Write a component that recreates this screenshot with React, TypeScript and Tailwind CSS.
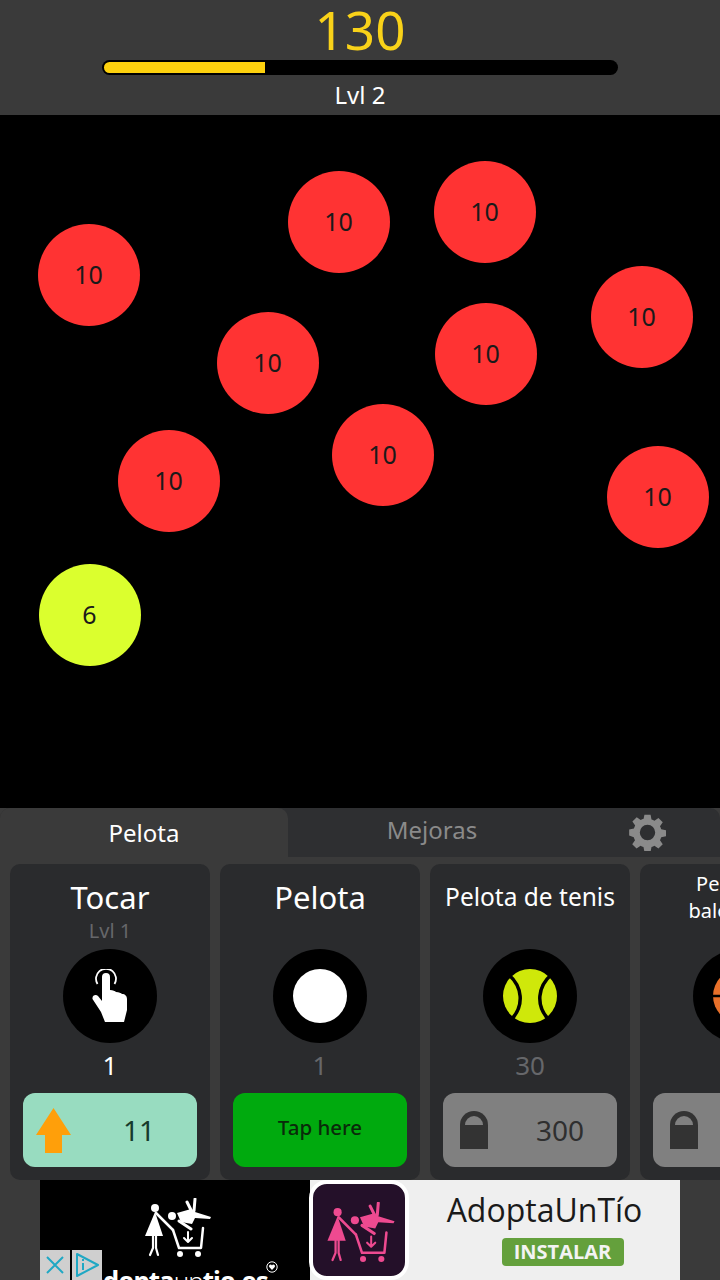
const font = "font-['Noto_Sans',sans-serif]";

const balls = [
  { x: 38, y: 224, n: 10 },
  { x: 288, y: 171, n: 10 },
  { x: 434, y: 161, n: 10 },
  { x: 591, y: 266, n: 10 },
  { x: 217, y: 312, n: 10 },
  { x: 435, y: 303, n: 10 },
  { x: 332, y: 404, n: 10 },
  { x: 118, y: 430, n: 10 },
  { x: 607, y: 446, n: 10 },
];

function Ball({ x, y, n, color }: { x: number; y: number; n: number; color: string }) {
  return (
    <div
      className="absolute flex h-[102px] w-[102px] items-center justify-center rounded-full pr-px text-[25px] text-[#1a1a1a]"
      style={{ left: x, top: y - 115, backgroundColor: color }}
    >
      {n}
    </div>
  );
}

// the two figures with the cart, used by the banner logo and the app icon
function Figures({ color }: { color: string }) {
  return (
    <g fill={color} stroke={color} strokeLinecap="round" strokeLinejoin="round">
      <circle cx="10" cy="10" r="4" stroke="none" />
      <path d="M10 14 L0 38 H18 Z" stroke="none" />
      <path d="M11 15 L28 32" strokeWidth="2.5" fill="none" />
      <path d="M8 38 V50 L5 57 M11 38 V50 L13 57" strokeWidth="2.2" fill="none" />
      <circle cx="27" cy="18" r="4" stroke="none" />
      <path d="M32 15 L46 11 L50 14 L66 19 L65 21 L50 20 L47 26 L36 24 Z" stroke="none" />
      <path d="M42 4 L46 12 M50 1 L49 13 M34 23 L46 31" strokeWidth="3" fill="none" />
      <path d="M28 32 L34 50 H56 L58 30" strokeWidth="2.5" fill="none" />
      <circle cx="35" cy="56" r="3" stroke="none" />
      <circle cx="53" cy="56" r="3" stroke="none" />
      <path d="M43 34 V43 M39 40 L43 44 L47 40" strokeWidth="2" fill="none" />
    </g>
  );
}

function Lock() {
  return (
    <svg width="28" height="38" viewBox="0 0 28 38">
      <path d="M0 38 V14 A14 14 0 0 1 28 14 V38 Z" fill="#333" />
      <path d="M5 14 A9 9 0 0 1 23 14 Z" fill="#808080" />
    </svg>
  );
}

function Hand() {
  return (
    <svg width="36" height="54" viewBox="0 0 36 54">
      <path d="M5.5 15 A10 10 0 1 1 22.5 15" fill="none" stroke="#fff" strokeWidth="1.8" />
      <path
        d="M10 8 A4 4 0 0 1 18 8 V21 C21 21 23 22 24 23 C27 23 29 24 30 25 C33 25 35 27 35 30 V41 L32 53 H13 L9 43 L0.5 30 C0 26 4 25 6 27 L10 32 Z"
        fill="#fff"
      />
    </svg>
  );
}

function Tennis() {
  return (
    <svg width="54" height="54" viewBox="0 0 54 54">
      <circle cx="27" cy="27" r="27" fill="#cfe80a" />
      <path d="M5 5 C20 18 21 36 9 50 M49 5 C34 18 33 36 45 50" fill="none" stroke="#000" strokeWidth="3.5" />
    </svg>
  );
}

function Card({
  title,
  small,
  sub,
  icon,
  value,
  valueDim,
  button,
}: {
  title: React.ReactNode;
  small?: boolean;
  sub?: string;
  icon: React.ReactNode;
  value: string;
  valueDim?: boolean;
  button: React.ReactNode;
}) {
  return (
    <div className="flex h-[316px] w-[200px] shrink-0 flex-col items-center rounded-[10px] bg-[#2a2b2d] px-[13px] pt-[11px]">
      <div
        className={`flex h-[44px] items-center whitespace-nowrap text-center text-white ${
          small ? "text-[24.5px]" : "text-[31px]"
        }`}
      >
        {title}
      </div>
      <div className="h-[30px] pt-px text-[20px] leading-[22px] text-[#66676a]">{sub}</div>
      <div className="flex h-[94px] w-[94px] shrink-0 items-center justify-center rounded-full bg-black">{icon}</div>
      <div className={`mt-[5px] h-[35px] text-[26px] leading-[35px] ${valueDim ? "text-[#66676a]" : "text-white"}`}>
        {value}
      </div>
      <div className="mt-[10px] w-full">{button}</div>
    </div>
  );
}

function LockButton({ price }: { price: string }) {
  return (
    <div className="flex h-[74px] w-full items-center rounded-[12px] bg-[#808080] pl-[17px] text-[28px] text-[#2f2f2f]">
      <Lock />
      <span className="ml-[48px]">{price}</span>
    </div>
  );
}

export default function App() {
  return (
    <div className={`flex h-[1280px] w-[720px] flex-col overflow-hidden bg-black ${font}`}>
      {/* Header */}
      <header className="flex h-[115px] shrink-0 flex-col items-center bg-[#3a3a3a]">
        <div className="h-[60px] text-[53px] leading-[60px] text-[#f9d219]">130</div>
        <div className="h-[15px] w-[516px] rounded-full bg-black p-[2px]">
          <div className="h-full w-[161px] rounded-l-full bg-[#fdd10e]" />
        </div>
        <div className="mt-[5px] text-[24px] leading-[30px] text-white">Lvl 2</div>
      </header>

      {/* Game area */}
      <main className="relative h-[693px] shrink-0 bg-black">
        {balls.map((b) => (
          <Ball key={`${b.x}-${b.y}`} x={b.x} y={b.y} n={b.n} color="#ff3333" />
        ))}
        <Ball x={39} y={564} n={6} color="#dbff2e" />
      </main>

      {/* Shop */}
      <section className="flex h-[472px] flex-col bg-[#3a3a3a]">
        <div className="flex h-[49px] shrink-0 rounded-t-[10px] bg-[#2e2f31]">
          <div className="flex h-full w-[288px] items-center justify-center rounded-t-[10px] bg-[#3a3a3a] text-[24px] text-white">
            Pelota
          </div>
          <div className="flex w-[288px] items-center justify-center pb-[5px] text-[24px] text-[#8a8a8a]">Mejoras</div>
          <div className="flex items-center pl-[53px]">
            <svg width="37" height="37" viewBox="0 0 24 24" fill="#8a8a8a">
              <path
                fillRule="evenodd"
                d="M10 0.5h4l.6 3.1c.7.2 1.3.5 1.9.8l2.6-1.8 2.8 2.8-1.8 2.6c.4.6.6 1.2.8 1.9l3.1.6v4l-3.1.6c-.2.7-.5 1.3-.8 1.9l1.8 2.6-2.8 2.8-2.6-1.8c-.6.4-1.2.6-1.9.8l-.6 3.1h-4l-.6-3.1c-.7-.2-1.3-.5-1.9-.8l-2.6 1.8-2.8-2.8 1.8-2.6c-.4-.6-.6-1.2-.8-1.9L.1 14v-4l3.1-.6c.2-.7.5-1.3.8-1.9L2.2 4.9 5 2.1l2.6 1.8c.6-.4 1.2-.6 1.9-.8zM12 7a5 5 0 1 0 0 10 5 5 0 0 0 0-10z"
              />
            </svg>
          </div>
        </div>

        <div className="mt-[7px] flex h-[316px] shrink-0 gap-[10px] pl-[10px]">
          <Card
            title="Tocar"
            sub="Lvl 1"
            icon={<Hand />}
            value="1"
            button={
              <div className="flex h-[74px] w-full items-center rounded-[12px] bg-[#98dcc0] pl-[13px] text-[28px] text-[#163a2c]">
                <svg width="35" height="45" viewBox="0 0 35 45">
                  <path d="M17.5 0 L35 27 H26 V45 H9 V27 H0 Z" fill="#ff9f0a" />
                </svg>
                <span className="ml-[52px]">11</span>
              </div>
            }
          />
          <Card
            title="Pelota"
            icon={<div className="h-[54px] w-[54px] rounded-full bg-white" />}
            value="1"
            valueDim
            button={
              <div className="flex h-[74px] w-full items-center justify-center rounded-[12px] bg-[#00aa0e] pb-[5px] text-[20.5px] font-medium text-[#0a2a0a]">
                Tap here
              </div>
            }
          />
          <Card title="Pelota de tenis" small icon={<Tennis />} value="30" valueDim button={<LockButton price="300" />} />
          <Card
            title={
              <span className="block text-[20px] leading-[27px]">
                Pelota de
                <br />
                baloncesto
              </span>
            }
            small
            icon={
              <svg width="54" height="54" viewBox="0 0 54 54">
                <circle cx="27" cy="27" r="27" fill="#e8702a" />
                <path d="M0 27 H54 M27 0 V54 M9 6 C17 18 17 36 9 48 M45 6 C37 18 37 36 45 48" fill="none" stroke="#000" strokeWidth="2.5" />
              </svg>
            }
            value=""
            button={<LockButton price="1000" />}
          />
        </div>

        {/* Ad */}
        <div className="mx-[40px] flex h-[100px] shrink-0 overflow-hidden">
          <div className="relative flex w-[270px] flex-col items-center overflow-hidden bg-black pt-[18px]">
            <svg width="66" height="59" viewBox="0 0 66 59" className="ml-[6px] shrink-0">
              <Figures color="#fff" />
            </svg>
            <div className="ml-[6px] mt-[9px] shrink-0 whitespace-nowrap text-[26px] font-bold leading-[30px] tracking-[-1px] text-white">
              adopta<span className="font-light">un</span>tio.es
            </div>
            <svg width="12" height="12" viewBox="0 0 12 12" className="absolute left-[226px] top-[81px]">
              <circle cx="6" cy="6" r="5.2" fill="none" stroke="#fff" strokeWidth="1" />
              <path d="M6 9 L3.2 6 A1.5 1.5 0 0 1 6 4.4 A1.5 1.5 0 0 1 8.8 6 Z" fill="#fff" />
            </svg>
            <div className="absolute bottom-0 left-0 flex gap-[2px]">
              <div className="flex h-[30px] w-[30px] items-center justify-center bg-[#cfcfcf]">
                <svg width="18" height="18" viewBox="0 0 18 18">
                  <path d="M1 1 L17 17 M17 1 L1 17" stroke="#1fa8c4" strokeWidth="2" />
                </svg>
              </div>
              <div className="flex h-[30px] w-[30px] items-center justify-center bg-[#cfcfcf]">
                <svg width="26" height="26" viewBox="0 0 26 26" fill="none" stroke="#1fa8c4" strokeWidth="2" strokeLinejoin="round">
                  <path d="M3 2 L24 13 L3 24 Z" />
                  <path d="M9 11 V18 M9 7 V9" />
                </svg>
              </div>
            </div>
          </div>
          <div className="flex flex-1 bg-[#efefef]">
            <div className="z-10 ml-[-1px] h-[100px] w-[100px] shrink-0 rounded-[18px] border-[4px] border-white bg-[#241029] pl-[14px] pt-[18px]">
              <svg width="68" height="60" viewBox="0 0 66 59">
                <Figures color="#ee4a90" />
              </svg>
            </div>
            <div className="flex flex-1 flex-col items-center">
              <div className="mt-[5px] h-[50px] text-[32px] leading-[50px] text-[#1a1a1a] font-['Open_Sans',sans-serif]">
                AdoptaUnTío
              </div>
              <div className="ml-[36px] mt-[3px] flex h-[28px] w-[122px] items-center justify-center rounded-[4px] bg-[#64a03c] text-[20px] font-bold text-[#f3f3f3] font-['Open_Sans',sans-serif]">
                INSTALAR
              </div>
            </div>
          </div>
        </div>
      </section>
    </div>
  );
}
